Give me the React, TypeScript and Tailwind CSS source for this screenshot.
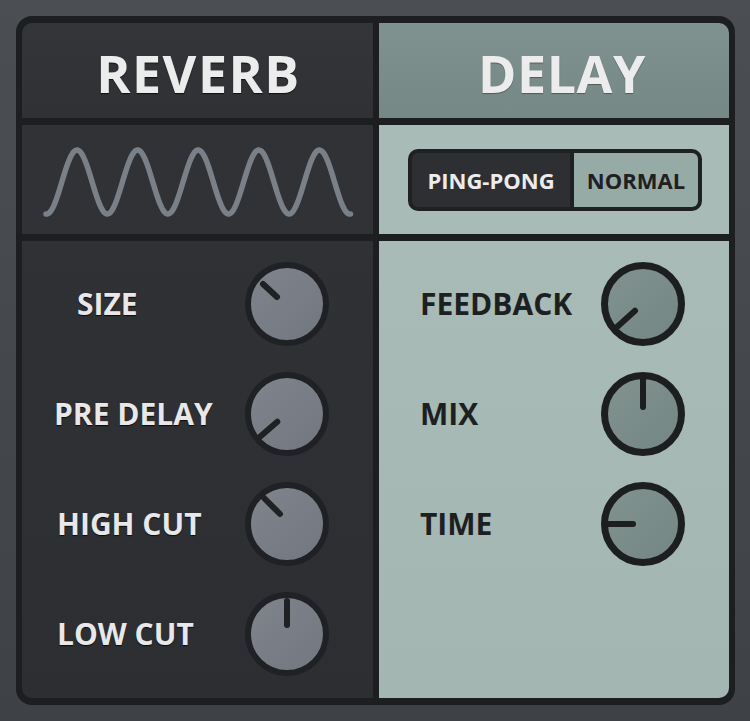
const wavePath = (() => {
  const pts: string[] = [];
  for (let x = 24; x <= 329; x += 1.5) {
    const y = 57 - 32 * Math.cos((2 * Math.PI * (x - 55)) / 60.6);
    pts.push(`${pts.length ? "L" : "M"}${x.toFixed(1)} ${y.toFixed(1)}`);
  }
  return pts.join(" ");
})();

type KnobProps = {
  a: [number, number];
  b: [number, number];
  light?: boolean;
};

const Knob = ({ a, b, light }: KnobProps) => {
  const ring = light ? "#1c1e20" : "#1f2124";
  return (
    <svg width="84" height="84" viewBox="0 0 84 84" className="shrink-0">
      <defs>
        <linearGradient id={light ? "kl" : "kd"} x1="0" y1="0" x2="1" y2="1">
          <stop offset="0" stopColor={light ? "#81928f" : "#80858d"} />
          <stop offset="1" stopColor={light ? "#748683" : "#72777f"} />
        </linearGradient>
      </defs>
      <circle
        cx="42"
        cy="42"
        r={light ? 38.5 : 39}
        fill={`url(#${light ? "kl" : "kd"})`}
        stroke={ring}
        strokeWidth={light ? 7 : 6}
      />
      <line
        x1={42 + a[0]}
        y1={42 + a[1]}
        x2={42 + b[0]}
        y2={42 + b[1]}
        stroke={ring}
        strokeWidth="6"
        strokeLinecap="round"
      />
    </svg>
  );
};

const font = "font-['Open_Sans','Noto_Sans',sans-serif]";

const leftRows: { label: string; pad: string; a: [number, number]; b: [number, number] }[] = [
  { label: "SIZE", pad: "pl-[55px]", a: [-24, -20], b: [-10, -7] },
  { label: "PRE DELAY", pad: "pl-[32px]", a: [-27, 22.7], b: [-9.7, 7.7] },
  { label: "HIGH CUT", pad: "pl-[35px]", a: [-23, -26], b: [-7, -10] },
  { label: "LOW CUT", pad: "pl-[35px]", a: [0, -33], b: [0, -9] },
];

const rightRows: { label: string; a: [number, number]; b: [number, number] }[] = [
  { label: "FEEDBACK", a: [-26.3, 23.3], b: [-8, 6.7] },
  { label: "MIX", a: [0, -37], b: [0, -7] },
  { label: "TIME", a: [-37, 0], b: [-10, 0] },
];

export default function App() {
  return (
    <div className={`w-[750px] h-[721px] bg-gradient-to-b from-[#4b4e53] to-[#3e4145] pt-[16px] pl-[16px] ${font}`}>
      <div className="w-[719px] h-[689px] rounded-[16px] bg-[#1c1e20] px-[6px] py-[7px] grid grid-cols-[351px_350px] grid-rows-[95px_109px_457px] gap-x-[6px] gap-y-[7px]">
        {/* headers */}
        <div className="rounded-tl-[10px] bg-gradient-to-b from-[#333539] to-[#2f3135] flex items-center justify-center pt-[5px] pl-[2px]">
          <span className="text-[52px] leading-none font-bold tracking-[1.5px] text-[#ececec] [text-shadow:0_1px_1px_rgba(0,0,0,0.7)]">
            REVERB
          </span>
        </div>
        <div className="rounded-tr-[10px] bg-gradient-to-b from-[#7f9290] to-[#758885] flex items-center justify-center pt-[5px] pl-[16px]">
          <span className="text-[52px] leading-none font-bold tracking-[0.5px] text-[#ececec] [text-shadow:0_1px_1px_rgba(0,0,0,0.35)]">
            DELAY
          </span>
        </div>

        {/* wave / mode */}
        <div className="bg-[#303236]">
          <svg width="351" height="109" viewBox="0 0 351 109">
            <path d={wavePath} fill="none" stroke="#7a8088" strokeWidth="5.5" strokeLinecap="round" strokeLinejoin="round" />
          </svg>
        </div>
        <div className="bg-[#a8bbb6] flex items-center justify-center pl-[2px]">
          <div className="flex h-[62px] w-[294px] rounded-[10px] border-[4px] border-[#1e2022] bg-[#1e2022] overflow-hidden">
            <div className="w-[158px] bg-[#2d2f32] flex items-center justify-center">
              <span className="text-[22px] font-bold text-[#ececec] leading-none">PING-PONG</span>
            </div>
            <div className="flex-1 ml-[4px] bg-[#96aba5] flex items-center justify-center">
              <span className="text-[22px] font-bold text-[#1e2022] leading-none">NORMAL</span>
            </div>
          </div>
        </div>

        {/* knobs */}
        <div className="rounded-bl-[10px] bg-gradient-to-b from-[#2f3135] to-[#2c2e32] pt-[21px] flex flex-col gap-[26px]">
          {leftRows.map((r) => (
            <div key={r.label} className="flex items-center h-[84px]">
              <div className="w-[223px]">
                <div className={`${r.pad} text-[30px] font-bold leading-none text-[#e8e8e8] [text-shadow:0_1px_1px_rgba(0,0,0,0.8)]`}>
                  {r.label}
                </div>
              </div>
              <Knob a={r.a} b={r.b} />
            </div>
          ))}
        </div>
        <div className="rounded-br-[10px] bg-gradient-to-b from-[#a8bbb6] to-[#a3b6b1] pt-[21px] flex flex-col gap-[26px]">
          {rightRows.map((r) => (
            <div key={r.label} className="flex items-center h-[84px]">
              <div className="w-[222px] pl-[41px] text-[30px] font-bold leading-none text-[#1d1f21]">{r.label}</div>
              <Knob a={r.a} b={r.b} light />
            </div>
          ))}
        </div>
      </div>
    </div>
  );
}
